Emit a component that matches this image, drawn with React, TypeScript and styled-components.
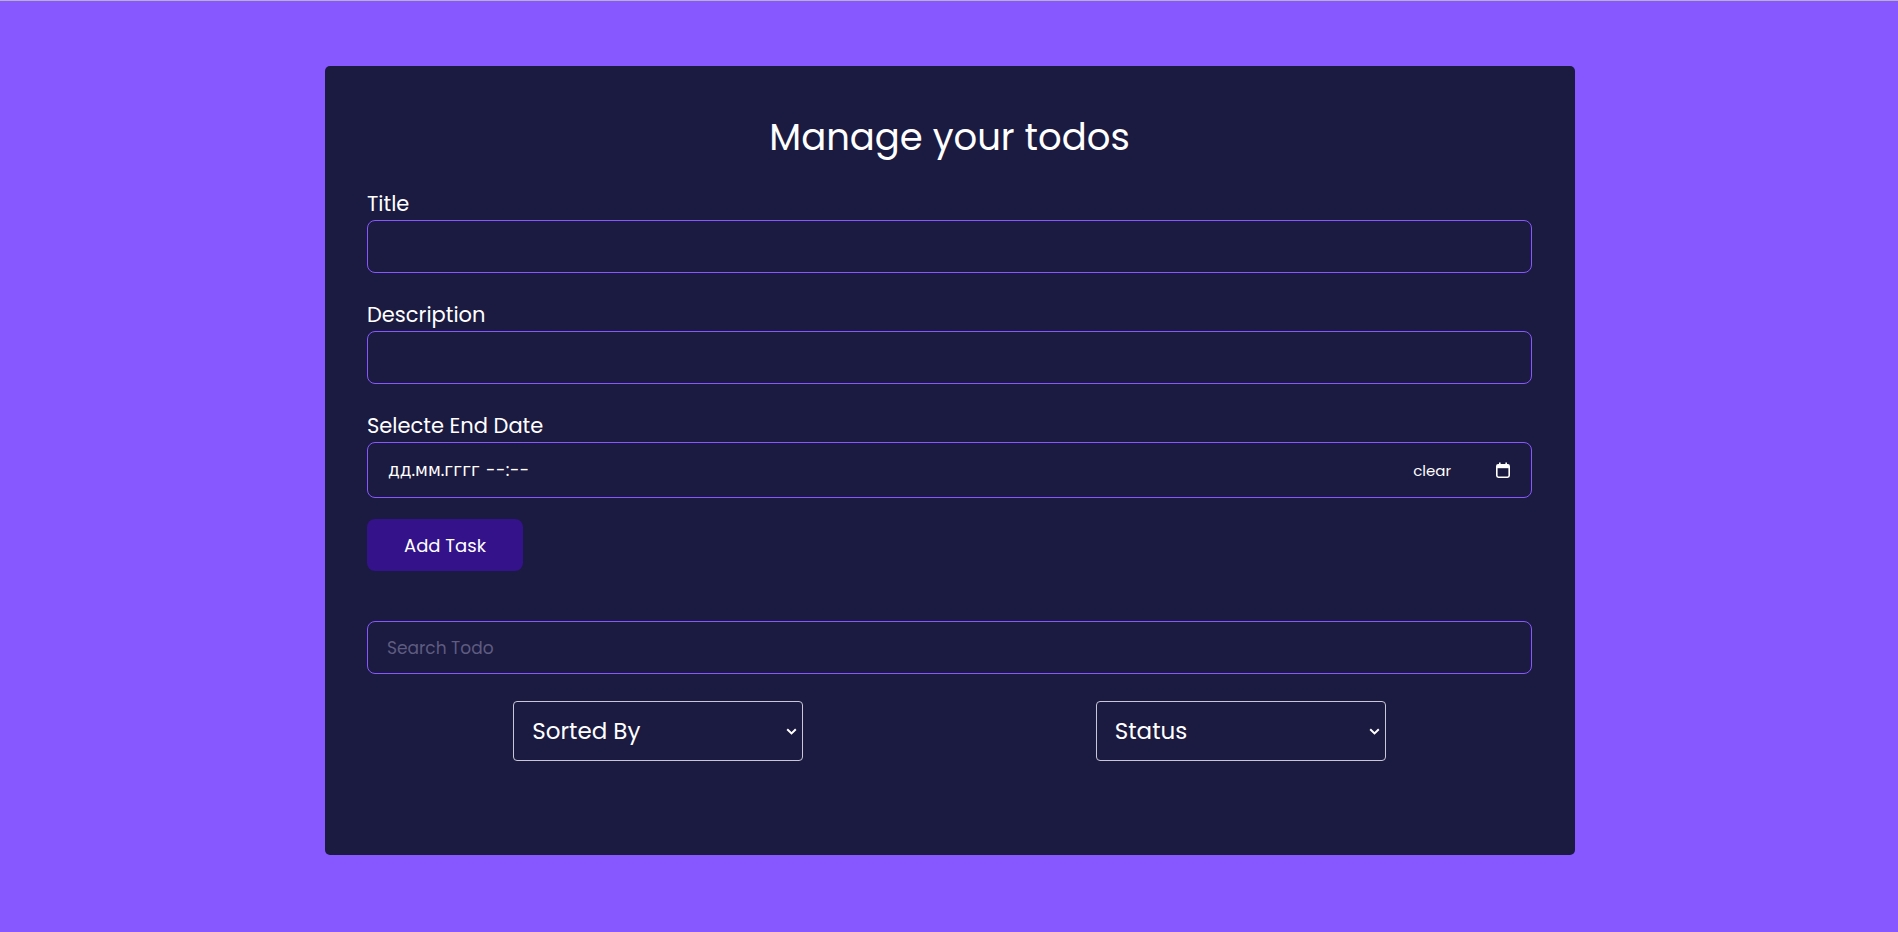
import * as React from 'react';
import styled, { createGlobalStyle } from 'styled-components';

const colors = {
  page: '#8758ff',
  card: '#1b1a40',
  accent: '#8758ff',
  button: '#33128a',
  text: '#ffffff',
  muted: '#5e5c80',
  selectBorder: '#c9c7d6',
};

const GlobalStyle = createGlobalStyle`
  html, body {
    margin: 0;
    padding: 0;
  }
  body {
    background: ${colors.page};
    border-top: 1px solid #b8b0c8;
    font-family: 'Poppins', 'Open Sans', 'Noto Sans', sans-serif;
    min-height: 931px;
  }
`;

const Page = styled.div`
  display: flex;
  justify-content: center;
  padding: 65px 0 77px 2px;
`;

const Card = styled.div`
  width: 1250px;
  box-sizing: border-box;
  background: ${colors.card};
  border-radius: 5px;
  padding: 43px 43px 94px 42px;
  display: flex;
  flex-direction: column;
`;

const Heading = styled.h1`
  margin: 0 0 24px;
  text-align: center;
  color: ${colors.text};
  font-size: 37px;
  font-weight: 400;
  line-height: 56px;
`;

const Field = styled.div`
  display: flex;
  flex-direction: column;
  margin-bottom: 27px;
`;

const Label = styled.label`
  color: ${colors.text};
  font-size: 21px;
  line-height: 30px;
  margin-bottom: 1px;
`;

const TextInput = styled.input`
  box-sizing: border-box;
  height: 53px;
  width: 100%;
  background: transparent;
  border: 1px solid ${colors.accent};
  border-radius: 8px;
  padding: 0 19px;
  color: ${colors.text};
  font-family: inherit;
  font-size: 17px;
  outline: none;

  &::placeholder {
    color: ${colors.muted};
  }
`;

const DateBox = styled.div`
  box-sizing: border-box;
  height: 56px;
  display: flex;
  align-items: center;
  border: 1px solid ${colors.accent};
  border-radius: 8px;
  padding: 0 21px 0 20px;
  color: ${colors.text};
`;

const DateText = styled.span`
  flex: 1;
  font-family: 'Poppins', 'DejaVu Sans', sans-serif;
  font-size: 17px;
`;

const DashText = styled.span`
  margin-left: 6px;
  letter-spacing: 0.5px;
`;

const ClearText = styled.span`
  font-size: 15px;
  margin-right: 45px;
`;

const AddButton = styled.button`
  align-self: flex-start;
  width: 156px;
  height: 52px;
  margin-top: -6px;
  margin-bottom: 50px;
  border: none;
  border-radius: 8px;
  background: ${colors.button};
  color: ${colors.text};
  font-family: inherit;
  font-size: 18px;
  cursor: pointer;
`;

const FilterRow = styled.div`
  display: flex;
  margin-top: 27px;
`;

const FilterCell = styled.div`
  flex: 1;
  display: flex;
  justify-content: center;
`;

const SelectWrap = styled.div`
  position: relative;
  width: 290px;
  height: 60px;
`;

const Select = styled.select`
  appearance: none;
  box-sizing: border-box;
  width: 100%;
  height: 100%;
  background: ${colors.card};
  border: 1px solid ${colors.selectBorder};
  border-radius: 4px;
  color: ${colors.text};
  font-family: inherit;
  font-size: 23px;
  padding: 0 18px;
  outline: none;
`;

const Chevron = styled.svg`
  position: absolute;
  right: 6px;
  top: 27px;
  pointer-events: none;
`;

const CalendarIcon = () => (
  <svg width="14" height="16" viewBox="0 0 14 16">
    <rect x="3" y="0.5" width="1.6" height="3" fill="#fff" />
    <rect x="9.4" y="0.5" width="1.6" height="3" fill="#fff" />
    <rect x="0.8" y="2.8" width="12.4" height="12.4" rx="1.6" fill="none" stroke="#fff" strokeWidth="1.6" />
    <rect x="0.8" y="2.8" width="12.4" height="3.4" fill="#fff" />
  </svg>
);

const FilterSelect = ({ label }: { label: string }) => (
  <SelectWrap>
    <Select defaultValue="">
      <option value="">{label}</option>
    </Select>
    <Chevron width="11" height="7" viewBox="0 0 11 7">
      <path d="M1.2 1.2 L5.5 5.4 L9.8 1.2" fill="none" stroke="#fff" strokeWidth="2" />
    </Chevron>
  </SelectWrap>
);

export default function App() {
  return (
    <>
      <GlobalStyle />
      <Page>
        <Card>
          <Heading>Manage your todos</Heading>
          <Field>
            <Label>Title</Label>
            <TextInput type="text" />
          </Field>
          <Field>
            <Label>Description</Label>
            <TextInput type="text" />
          </Field>
          <Field>
            <Label>Selecte End Date</Label>
            <DateBox>
              <DateText>
                дд.мм.гггг<DashText>--:--</DashText>
              </DateText>
              <ClearText>clear</ClearText>
              <CalendarIcon />
            </DateBox>
          </Field>
          <AddButton>Add Task</AddButton>
          <TextInput type="text" placeholder="Search Todo" />
          <FilterRow>
            <FilterCell>
              <FilterSelect label="Sorted By" />
            </FilterCell>
            <FilterCell>
              <FilterSelect label="Status" />
            </FilterCell>
          </FilterRow>
        </Card>
      </Page>
    </>
  );
}
